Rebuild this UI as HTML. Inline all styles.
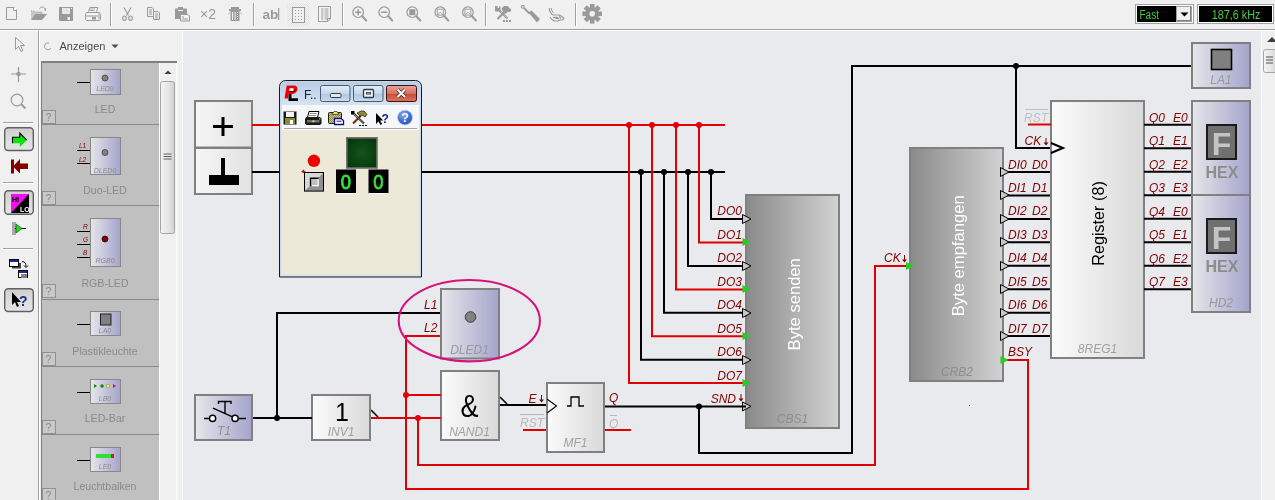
<!DOCTYPE html><html><head><meta charset="utf-8"><style>
html,body{margin:0;padding:0;width:1275px;height:500px;overflow:hidden;background:#e9eaee}
svg{position:absolute;left:0;top:0;font-family:"Liberation Sans",sans-serif;will-change:transform}
</style></head><body>
<svg width="1275" height="500" viewBox="0 0 1275 500">
<defs>
<linearGradient id="gGate" x1="0" x2="1" y1="0" y2="0"><stop offset="0" stop-color="#fbfbfb"/><stop offset="1" stop-color="#d9d9d9"/></linearGradient>
<linearGradient id="gBlue" x1="0" x2="1" y1="0" y2="0"><stop offset="0" stop-color="#e6e6ea"/><stop offset="1" stop-color="#a4a4cc"/></linearGradient>
<linearGradient id="gDark" x1="0" x2="1" y1="0" y2="0"><stop offset="0" stop-color="#8a8a8a"/><stop offset="1" stop-color="#d2d2d2"/></linearGradient>
<linearGradient id="gTitle" x1="0" x2="0" y1="0" y2="1"><stop offset="0" stop-color="#b9cde6"/><stop offset="1" stop-color="#d6e3f1"/></linearGradient>
<linearGradient id="gBtn" x1="0" x2="0" y1="0" y2="1"><stop offset="0" stop-color="#e4edf7"/><stop offset="0.5" stop-color="#c5d7ea"/><stop offset="0.51" stop-color="#b0c7e0"/><stop offset="1" stop-color="#c9dbee"/></linearGradient>
<linearGradient id="gClose" x1="0" x2="0" y1="0" y2="1"><stop offset="0" stop-color="#e8a598"/><stop offset="0.5" stop-color="#d8705e"/><stop offset="0.51" stop-color="#c84a36"/><stop offset="1" stop-color="#d87860"/></linearGradient>
<linearGradient id="gThumb" x1="0" x2="1" y1="0" y2="0"><stop offset="0" stop-color="#f4f4f4"/><stop offset="0.6" stop-color="#e4e4e4"/><stop offset="1" stop-color="#cfcfcf"/></linearGradient>
</defs>

<rect x="0" y="0" width="1275" height="30" fill="#f0f0f0"/>
<rect x="0" y="29" width="1275" height="1" fill="#a0a0a0"/>
<rect x="0" y="30" width="1275" height="1" fill="#ffffff"/>
<rect x="0" y="31" width="183" height="469" fill="#f0f0f0"/>
<rect x="38" y="31" width="1" height="469" fill="#a0a0a0"/>
<rect x="39" y="31" width="1" height="469" fill="#ffffff"/>
<rect x="41" y="61" width="136" height="439" fill="#808080"/>
<rect x="42" y="63" width="117" height="437" fill="#c0c0c0"/>
<rect x="159" y="63" width="17" height="437" fill="#f0f0f0"/>
<rect x="159" y="63" width="1" height="437" fill="#ffffff"/>
<rect x="176" y="63" width="1" height="437" fill="#ffffff"/>
<path d="M164.5 74 L168 70.5 L171.5 74 Z" fill="#404040"/>
<rect x="160.5" y="81.5" width="14" height="152" rx="2" fill="url(#gThumb)" stroke="#a6a6a6"/>
<path d="M163.5 154h8M163.5 156.5h8M163.5 159h8" stroke="#606060" stroke-width="1"/>
<rect x="182" y="31" width="1" height="469" fill="#ffffff"/>
<rect x="1262" y="31" width="13" height="469" fill="#f0f0f0"/>
<rect x="1261" y="31" width="1" height="469" fill="#ffffff"/>
<path d="M1267 42 L1272 37 L1277 42 Z" fill="#404040"/>
<rect x="1263.5" y="49.5" width="14" height="23" rx="2" fill="url(#gThumb)" stroke="#a6a6a6"/>
<path d="M1266 57h7M1266 60h7M1266 63h7" stroke="#505050" stroke-width="1"/>
<path d="M6.5 7.5h7.5l2.5 2.5v9.5h-10z" fill="#f0f0f0" stroke="#9a9a9a"/><path d="M13.5 7.5v3h3" fill="none" stroke="#9a9a9a"/><rect x="14" y="8" width="2" height="2" fill="#fff"/>
<path d="M31 11h3l1 1h7v2h-7l-4 6z" fill="#c8c8c8"/><path d="M31 20l4-6h12l-5 6z" fill="#9a9a9a"/><path d="M31 11h3l1 1h7v2" fill="none" stroke="#9a9a9a" stroke-dasharray="1 1"/><path d="M39.5 8.5c2-2 4-2 5 0M44.5 8.5l1 2M46 8l-1 2.5" fill="none" stroke="#9a9a9a"/>
<path d="M59 7h14v14h-13l-1-1z" fill="#9a9a9a"/><rect x="62" y="8" width="8" height="6" fill="#e6e6e6"/><rect x="67.5" y="17" width="2.5" height="3" fill="#f0f0f0"/><rect x="71" y="8" width="1" height="1" fill="#f0f0f0"/>
<path d="M88.5 11.5l1.5-4h8l-1.5 4" fill="#f4f4f4" stroke="#9a9a9a"/><path d="M90 9h5M89.5 10.5h5" stroke="#9a9a9a" stroke-width="0.8"/>
<path d="M86.5 12.5h13l1 2v5l-1 1h-13l-1-1v-5z" fill="#f4f4f4" stroke="#9a9a9a"/><rect x="86" y="15.5" width="14" height="1" fill="#9a9a9a"/><rect x="92" y="17" width="4" height="2.5" fill="#9a9a9a"/><rect x="98" y="13.5" width="2" height="6" fill="#c8c8c8"/>
<rect x="110" y="3" width="1" height="23" fill="#a0a0a0"/><rect x="111" y="3" width="1" height="23" fill="#ffffff"/>
<path d="M124 7.5l4.5 8M131 7.5l-4.5 8" stroke="#9a9a9a" stroke-width="1.1" fill="none"/><ellipse cx="124.5" cy="18.2" rx="1.8" ry="2.2" fill="none" stroke="#9a9a9a" stroke-width="1.1"/><ellipse cx="130.5" cy="18.2" rx="1.8" ry="2.2" fill="none" stroke="#9a9a9a" stroke-width="1.1"/>
<path d="M147.5 7.5h4.5l1.5 1.5v7.5h-6z" fill="#f0f0f0" stroke="#9a9a9a"/><path d="M149 10h3M149 12h3M149 14h3" stroke="#9a9a9a"/><path d="M153.5 11.5h4.5l1.5 1.5v6.5h-6z" fill="#f0f0f0" stroke="#9a9a9a"/><path d="M155 14h3M155 16h3M155 18h3" stroke="#9a9a9a"/>
<path d="M175 8.5h11a1 1 0 0 1 1 1v9.5h-12z" fill="#9a9a9a"/><rect x="178" y="7" width="5" height="2" fill="#9a9a9a"/><rect x="178" y="10" width="5" height="1" fill="#f0f0f0"/><path d="M180.5 14.5h7.5l1.5 1.5v5h-9z" fill="#f4f4f4" stroke="#9a9a9a"/><path d="M182 17h2M182 19h6" stroke="#9a9a9a"/>
<text x="200" y="18.5" font-size="14" fill="#9a9a9a">×2</text>
<path d="M229 9h12v2h-12z M231 7h8v2h-8z M230.5 11h9v10h-9z" fill="#9a9a9a"/><path d="M232.5 12v8M235 12v8" stroke="#f4f4f4"/><path d="M237.5 12v1M237.5 14v1M237.5 16v1M237.5 18v1" stroke="#f4f4f4"/><path d="M228 14l2 -1M242 14l-2-1" stroke="#9a9a9a" stroke-width="0.6"/>
<rect x="253" y="3" width="1" height="23" fill="#a0a0a0"/><rect x="254" y="3" width="1" height="23" fill="#ffffff"/>
<text x="262.5" y="19" font-size="13.5" fill="#9a9a9a" font-weight="bold">ab</text><rect x="278" y="8" width="1.2" height="12" fill="#9a9a9a"/>
<pattern id="chk" width="2" height="2" patternUnits="userSpaceOnUse"><rect width="2" height="2" fill="#f4f4f4"/><rect width="1" height="1" fill="#e2e2e2"/><rect x="1" y="1" width="1" height="1" fill="#e2e2e2"/></pattern>
<rect x="287" y="3" width="23" height="23" fill="url(#chk)"/><rect x="292.5" y="7.5" width="12" height="15" fill="#f0f0f0" stroke="#9a9a9a"/>
<rect x="295" y="10" width="1" height="1" fill="#9a9a9a"/>
<rect x="295" y="13" width="1" height="1" fill="#9a9a9a"/>
<rect x="295" y="16" width="1" height="1" fill="#9a9a9a"/>
<rect x="295" y="19" width="1" height="1" fill="#9a9a9a"/>
<rect x="298" y="10" width="1" height="1" fill="#9a9a9a"/>
<rect x="298" y="13" width="1" height="1" fill="#9a9a9a"/>
<rect x="298" y="16" width="1" height="1" fill="#9a9a9a"/>
<rect x="298" y="19" width="1" height="1" fill="#9a9a9a"/>
<rect x="301" y="10" width="1" height="1" fill="#9a9a9a"/>
<rect x="301" y="13" width="1" height="1" fill="#9a9a9a"/>
<rect x="301" y="16" width="1" height="1" fill="#9a9a9a"/>
<rect x="301" y="19" width="1" height="1" fill="#9a9a9a"/>
<path d="M318.5 6.5h12v12.5l-3 2.5h-9z" fill="#f4f4f4" stroke="#9a9a9a"/><path d="M327.5 21.5v-3h3" fill="none" stroke="#9a9a9a"/>
<rect x="321" y="8.5" width="2.5" height="1" fill="#9a9a9a"/><rect x="324.5" y="8.5" width="4" height="1" fill="#9a9a9a"/><rect x="321" y="10.5" width="2.5" height="1" fill="#9a9a9a"/><rect x="324.5" y="10.5" width="4" height="1" fill="#9a9a9a"/><rect x="321" y="12.5" width="2.5" height="1" fill="#9a9a9a"/><rect x="324.5" y="12.5" width="4" height="1" fill="#9a9a9a"/><rect x="321" y="14.5" width="2.5" height="1" fill="#9a9a9a"/><rect x="324.5" y="14.5" width="4" height="1" fill="#9a9a9a"/><rect x="321" y="16.5" width="2.5" height="1" fill="#9a9a9a"/><rect x="324.5" y="16.5" width="4" height="1" fill="#9a9a9a"/><rect x="321" y="18.5" width="2.5" height="1" fill="#9a9a9a"/><rect x="324.5" y="18.5" width="4" height="1" fill="#9a9a9a"/>
<rect x="342" y="3" width="1" height="23" fill="#a0a0a0"/><rect x="343" y="3" width="1" height="23" fill="#ffffff"/>
<circle cx="358.2" cy="12.2" r="5.3" fill="#f2f2f2" stroke="#9a9a9a" stroke-width="1.2"/><path d="M362.0 16l4.2 4.5" stroke="#9a9a9a" stroke-width="2" stroke-linecap="round"/><path d="M355.2 12.2h6M358.2 9.2v6" stroke="#9a9a9a" stroke-width="1.6"/>
<circle cx="384.2" cy="12.2" r="5.3" fill="#f2f2f2" stroke="#9a9a9a" stroke-width="1.2"/><path d="M388.0 16l4.2 4.5" stroke="#9a9a9a" stroke-width="2" stroke-linecap="round"/><path d="M381.2 12.2h6" stroke="#9a9a9a" stroke-width="1.6"/>
<circle cx="412.3" cy="12.2" r="5.3" fill="#f2f2f2" stroke="#9a9a9a" stroke-width="1.2"/><path d="M416.1 16l4.2 4.5" stroke="#9a9a9a" stroke-width="2" stroke-linecap="round"/><rect x="409.3" y="9.2" width="6" height="6" fill="#9a9a9a"/>
<circle cx="440.3" cy="12.2" r="5.3" fill="#f2f2f2" stroke="#9a9a9a" stroke-width="1.2"/><path d="M444.1 16l4.2 4.5" stroke="#9a9a9a" stroke-width="2" stroke-linecap="round"/><path d="M437.3 9.2h6v6h-6zM437.3 15.2l3-3 3 3" fill="none" stroke="#9a9a9a" stroke-width="0.9"/>
<circle cx="467.9" cy="12.2" r="5.3" fill="#f2f2f2" stroke="#9a9a9a" stroke-width="1.2"/><path d="M471.7 16l4.2 4.5" stroke="#9a9a9a" stroke-width="2" stroke-linecap="round"/><path d="M464.9 9.2h6v6h-6zM464.9 15.2l3-3 3 3" fill="none" stroke="#9a9a9a" stroke-width="0.9"/>
<rect x="485" y="3" width="1" height="23" fill="#a0a0a0"/><rect x="486" y="3" width="1" height="23" fill="#ffffff"/>
<path d="M499 10l8.5 8.5" stroke="#9a9a9a" stroke-width="2.2"/><path d="M499.5 10.5l7.5 7.5" stroke="#f0f0f0" stroke-width="0.7" stroke-dasharray="1 1"/><path d="M495 6h2.5v2h1.5v-1.5h1.5v3.5l-1.5 1.5h-4z" fill="#9a9a9a"/>
<path d="M497.5 19l7.5-7.5" stroke="#9a9a9a" stroke-width="2.2"/><path d="M501.5 8.5l2.5-2.5h3.5l4 4-2 2.5-1.5-1-2.5 2.5-3-3z" fill="#9a9a9a"/>
<path d="M503 20h2v2h-2zM506 20h2v2h-2zM509 20h2v2h-2z" fill="#9a9a9a"/>
<circle cx="522.8" cy="6.8" r="1.4" fill="#f0f0f0" stroke="#9a9a9a" stroke-width="1.1"/><path d="M524 8l5.5 5.5" stroke="#9a9a9a" stroke-width="1.8"/><path d="M528.5 12.5l3-2 8.5 8.5-3 3.5z" fill="#9a9a9a"/>
<path d="M549.5 8v2.5l2 3.5 2 1h5.5l3 1.5 2 2-1.5 1.5h-3l-1.5 1h-4l-2.5-2-1.5-2" fill="none" stroke="#9a9a9a" stroke-width="1.1"/><path d="M551.5 8v2l2 3" fill="none" stroke="#9a9a9a" stroke-width="0.9"/><path d="M553 17.5h4l1.5 1.5M559 16.5l2 2" stroke="#9a9a9a" stroke-width="1.3"/>
<rect x="575" y="3" width="1" height="23" fill="#a0a0a0"/><rect x="576" y="3" width="1" height="23" fill="#ffffff"/>
<g transform="translate(592.2 13.8)"><circle r="6.8" fill="#9a9a9a"/><rect x="-2.3" y="-9.8" width="4.6" height="5" fill="#9a9a9a" transform="rotate(0)"/><rect x="-2.3" y="-9.8" width="4.6" height="5" fill="#9a9a9a" transform="rotate(45)"/><rect x="-2.3" y="-9.8" width="4.6" height="5" fill="#9a9a9a" transform="rotate(90)"/><rect x="-2.3" y="-9.8" width="4.6" height="5" fill="#9a9a9a" transform="rotate(135)"/><rect x="-2.3" y="-9.8" width="4.6" height="5" fill="#9a9a9a" transform="rotate(180)"/><rect x="-2.3" y="-9.8" width="4.6" height="5" fill="#9a9a9a" transform="rotate(225)"/><rect x="-2.3" y="-9.8" width="4.6" height="5" fill="#9a9a9a" transform="rotate(270)"/><rect x="-2.3" y="-9.8" width="4.6" height="5" fill="#9a9a9a" transform="rotate(315)"/><circle r="2.8" fill="#f0f0f0"/></g>
<rect x="1135" y="4" width="59" height="20" fill="#a0a0a0"/><rect x="1136" y="5" width="57" height="18" fill="#ffffff"/><rect x="1137" y="6" width="39" height="16" fill="#000"/>
<rect x="1176" y="6" width="16" height="16" fill="#a0a0a0"/><rect x="1177" y="7" width="14" height="14" fill="#f0f0f0"/><rect x="1190" y="7" width="1" height="14" fill="#808080"/><rect x="1177" y="20" width="14" height="1" fill="#808080"/><path d="M1180.5 12.5h8l-4 4z" fill="#000"/>
<text x="1139.5" y="19" font-size="12" fill="#40d040" textLength="19.5" lengthAdjust="spacingAndGlyphs">Fast</text>
<rect x="1197" y="4" width="77" height="20" fill="#a0a0a0"/><rect x="1198" y="5" width="75" height="18" fill="#ffffff"/><rect x="1199" y="6" width="73" height="16" fill="#000"/>
<text x="1211.8" y="19" font-size="12" fill="#40d040" textLength="48.6" lengthAdjust="spacingAndGlyphs">187,6 kHz</text>
<path d="M15.5 37.5v12l3-3 2.5 5 2-1-2.5-5h4z" fill="#f4f4f4" stroke="#9a9a9a"/>
<path d="M11 74h15M18.5 67v15" stroke="#9a9a9a" stroke-width="1.2"/><circle cx="18.5" cy="74" r="2.2" fill="#9a9a9a"/>
<circle cx="17" cy="100" r="5.8" fill="none" stroke="#9a9a9a" stroke-width="1.2"/><path d="M21 104l4.5 4.5" stroke="#9a9a9a" stroke-width="2"/>
<rect x="3" y="122" width="30" height="1" fill="#a0a0a0"/><rect x="3" y="123" width="30" height="1" fill="#fff"/>
<linearGradient id="gPb" x1="0" x2="0" y1="0" y2="1"><stop offset="0" stop-color="#cfcfcf"/><stop offset="0.5" stop-color="#dcdcdc"/><stop offset="1" stop-color="#e4e4e4"/></linearGradient>
<rect x="4.7" y="127.7" width="28.6" height="22.8" rx="3.5" fill="url(#gPb)" stroke="#606060" stroke-width="1.4"/>
<path d="M12.5 137.2h7.3v-4.2l7.2 7.1-7.2 7v-3.9h-7.3z" fill="#10e010"/><path d="M12.5 143.2v-6h7.3v-4.2l6.8 6.8" fill="none" stroke="#000" stroke-width="1.1"/>
<path d="M28 163.5h-8v-4.5l-7 7.5 7 7v-4.5h8z" fill="#800000"/><rect x="11" y="159.5" width="3" height="14" fill="#800000"/>
<rect x="3" y="182" width="30" height="1" fill="#a0a0a0"/><rect x="3" y="183" width="30" height="1" fill="#fff"/>
<rect x="4.7" y="190.7" width="28.6" height="23.6" rx="3.5" fill="url(#gPb)" stroke="#606060" stroke-width="1.4"/>
<path d="M11 194h18v19h-18z" fill="#f010f0"/><path d="M29 194v19h-18z" fill="#000"/>
<text x="12" y="201.5" font-size="7" font-weight="bold" fill="#000">HI</text><text x="20" y="211.5" font-size="7" font-weight="bold" fill="#fff">LO</text>
<rect x="12" y="222" width="4" height="13" fill="#a8a8a8"/><path d="M15 228.5h11" stroke="#000" stroke-width="1"/><path d="M16 224l6 4.5-6 4.5z" fill="#30d030" stroke="#107010" stroke-width="0.8"/>
<rect x="3" y="248" width="30" height="1" fill="#a0a0a0"/><rect x="3" y="249" width="30" height="1" fill="#fff"/>
<rect x="9.5" y="259.5" width="9" height="7" fill="#fff" stroke="#000"/><rect x="10" y="260" width="8" height="2" fill="#1a2a9a"/><rect x="19" y="263" width="2" height="5" fill="#404040"/><rect x="12" y="267" width="9" height="1.5" fill="#404040"/>
<rect x="18.5" y="270.5" width="9" height="7" fill="#fff" stroke="#000"/><rect x="19" y="271" width="8" height="2" fill="#1a2a9a"/><rect x="21" y="274" width="6" height="4" fill="#808080"/>
<path d="M22 261.5c3 0 4 2 4 5" fill="none" stroke="#000"/><path d="M24 265.5l2 2 2-2" fill="none" stroke="#000"/>
<rect x="4.7" y="288.7" width="28.6" height="22.8" rx="3.5" fill="url(#gPb)" stroke="#606060" stroke-width="1.4"/>
<path d="M12 292v13l3-3 2 5 2-1-2-4h4z" fill="#000"/><text x="19" y="306" font-size="14" font-weight="bold" fill="#1a2a9a">?</text>
<path d="M49 43a3.5 3.5 0 1 0 2 5" fill="none" stroke="#a0a0a0"/>
<text x="59.5" y="50" font-size="11" fill="#4a4a4a">Anzeigen</text>
<path d="M111.5 44.5h7l-3.5 3.8z" fill="#505050"/>
<rect x="90.5" y="69.5" width="30" height="25" fill="url(#gBlue)" stroke="#888"/>
<rect x="77" y="82" width="13" height="1" fill="#000"/>
<circle cx="105" cy="78" r="3" fill="#808080" stroke="#404040" stroke-width="0.8"/>
<text x="105" y="91" font-size="7" font-style="italic" fill="#8a8a8a" text-anchor="middle">LED0</text>
<text x="105" y="113" font-size="10.6" fill="#8a8a8a" text-anchor="middle">LED</text>
<rect x="42.5" y="110.5" width="13" height="13" fill="#c8c8c8" stroke="#909090"/><text x="45.5" y="121" font-size="10.5" fill="#8a8a8a">?</text>
<rect x="42" y="124" width="117" height="1" fill="#8a8a8a"/>
<rect x="90.5" y="137.5" width="30" height="37" fill="url(#gBlue)" stroke="#888"/>
<rect x="77" y="150" width="13" height="1" fill="#000"/>
<rect x="77" y="163" width="13" height="1" fill="#000"/>
<text x="79" y="148" font-size="6.5" font-style="italic" fill="#800000">L1</text><text x="79" y="162" font-size="6.5" font-style="italic" fill="#800000">L2</text>
<circle cx="105" cy="152.5" r="3" fill="#808080" stroke="#404040" stroke-width="0.8"/>
<text x="105" y="172.5" font-size="7" font-style="italic" fill="#8a8a8a" text-anchor="middle">DLED0</text>
<text x="105" y="194" font-size="10.6" fill="#8a8a8a" text-anchor="middle">Duo-LED</text>
<rect x="42.5" y="191.5" width="13" height="13" fill="#c8c8c8" stroke="#909090"/><text x="45.5" y="202" font-size="10.5" fill="#8a8a8a">?</text>
<rect x="42" y="205" width="117" height="1" fill="#8a8a8a"/>
<rect x="90.5" y="218.5" width="30" height="48" fill="url(#gBlue)" stroke="#888"/>
<rect x="77" y="231" width="13" height="1" fill="#000"/>
<rect x="77" y="244" width="13" height="1" fill="#000"/>
<rect x="77" y="257" width="13" height="1" fill="#000"/>
<text x="83" y="229" font-size="6.5" font-style="italic" fill="#800000">R</text><text x="83" y="242" font-size="6.5" font-style="italic" fill="#800000">G</text><text x="83" y="255" font-size="6.5" font-style="italic" fill="#800000">B</text>
<circle cx="105" cy="239" r="3" fill="#800000" stroke="#400000" stroke-width="0.8"/>
<text x="105" y="263" font-size="7" font-style="italic" fill="#8a8a8a" text-anchor="middle">RGB0</text>
<text x="105" y="287" font-size="10.6" fill="#8a8a8a" text-anchor="middle">RGB-LED</text>
<rect x="42.5" y="284.5" width="13" height="13" fill="#c8c8c8" stroke="#909090"/><text x="45.5" y="295" font-size="10.5" fill="#8a8a8a">?</text>
<rect x="42" y="299" width="117" height="1" fill="#8a8a8a"/>
<rect x="90.5" y="311.5" width="30" height="24" fill="url(#gBlue)" stroke="#888"/>
<rect x="77" y="324" width="13" height="1" fill="#000"/>
<rect x="100.5" y="314" width="10.5" height="11" fill="#808080" stroke="#202020"/>
<text x="105" y="333" font-size="7" font-style="italic" fill="#8a8a8a" text-anchor="middle">LA0</text>
<text x="105" y="355" font-size="10.6" fill="#8a8a8a" text-anchor="middle">Plastikleuchte</text>
<rect x="42.5" y="352.5" width="13" height="13" fill="#c8c8c8" stroke="#909090"/><text x="45.5" y="363" font-size="10.5" fill="#8a8a8a">?</text>
<rect x="42" y="366" width="117" height="1" fill="#8a8a8a"/>
<rect x="90.5" y="379.5" width="30" height="24" fill="url(#gBlue)" stroke="#888"/>
<rect x="77" y="392" width="13" height="1" fill="#000"/>
<path d="M94 384l3 2-3 2z" fill="#208020"/><circle cx="102" cy="386" r="1.8" fill="#208020"/><circle cx="108" cy="386" r="1.8" fill="#f0f060" stroke="#808000" stroke-width="0.5"/><path d="M113 384l3 2-3 2z" fill="#c02020"/>
<text x="105" y="401" font-size="7" font-style="italic" fill="#8a8a8a" text-anchor="middle">LB0</text>
<text x="105" y="422" font-size="10.6" fill="#8a8a8a" text-anchor="middle">LED-Bar</text>
<rect x="42.5" y="420.5" width="13" height="13" fill="#c8c8c8" stroke="#909090"/><text x="45.5" y="431" font-size="10.5" fill="#8a8a8a">?</text>
<rect x="42" y="434" width="117" height="1" fill="#8a8a8a"/>
<rect x="90.5" y="447.5" width="30" height="24" fill="url(#gBlue)" stroke="#888"/>
<rect x="77" y="460" width="13" height="1" fill="#000"/>
<rect x="96" y="454" width="15" height="4" fill="#30e030"/><rect x="111" y="454" width="3" height="4" fill="#d02020"/>
<text x="105" y="469" font-size="7" font-style="italic" fill="#8a8a8a" text-anchor="middle">LE0</text>
<text x="105" y="490" font-size="10.6" fill="#8a8a8a" text-anchor="middle">Leuchtbalken</text>
<rect x="42.5" y="488.5" width="13" height="13" fill="#c8c8c8" stroke="#909090"/><text x="45.5" y="499" font-size="10.5" fill="#8a8a8a">?</text>
<rect x="194" y="100" width="59" height="95" fill="#808080"/>
<linearGradient id="gPw" x1="0" x2="1"><stop offset="0" stop-color="#f6f6f6"/><stop offset="1" stop-color="#e2e2e2"/></linearGradient>
<rect x="196" y="102" width="55" height="44.5" fill="url(#gPw)"/><rect x="196" y="149" width="55" height="44" fill="url(#gPw)"/>
<rect x="213" y="125" width="20" height="3" fill="#000"/><rect x="221.5" y="117" width="3" height="19" fill="#000"/>
<rect x="221" y="158" width="4" height="18" fill="#000"/><rect x="209" y="175" width="30" height="10" fill="#000"/>
<path d="M253 125H280" fill="none" stroke="#e00000" stroke-width="2" stroke-linejoin="miter" stroke-linecap="square"/>
<path d="M421 125H724" fill="none" stroke="#e00000" stroke-width="2" stroke-linejoin="miter" stroke-linecap="square"/>
<path d="M253 172H280" fill="none" stroke="#000000" stroke-width="2" stroke-linejoin="miter" stroke-linecap="square"/>
<path d="M421 172H724" fill="none" stroke="#000000" stroke-width="2" stroke-linejoin="miter" stroke-linecap="square"/>
<path d="M711 172V219.0H745" fill="none" stroke="#000000" stroke-width="2" stroke-linejoin="miter" stroke-linecap="square"/>
<path d="M688 172V265.9H745" fill="none" stroke="#000000" stroke-width="2" stroke-linejoin="miter" stroke-linecap="square"/>
<path d="M664 172V312.8H745" fill="none" stroke="#000000" stroke-width="2" stroke-linejoin="miter" stroke-linecap="square"/>
<path d="M641 172V359.7H745" fill="none" stroke="#000000" stroke-width="2" stroke-linejoin="miter" stroke-linecap="square"/>
<path d="M699 125V242.4H745" fill="none" stroke="#e00000" stroke-width="2" stroke-linejoin="miter" stroke-linecap="square"/>
<path d="M676 125V289.4H745" fill="none" stroke="#e00000" stroke-width="2" stroke-linejoin="miter" stroke-linecap="square"/>
<path d="M652 125V336.2H745" fill="none" stroke="#e00000" stroke-width="2" stroke-linejoin="miter" stroke-linecap="square"/>
<path d="M629 125V383.1H745" fill="none" stroke="#e00000" stroke-width="2" stroke-linejoin="miter" stroke-linecap="square"/>
<circle cx="711" cy="172" r="3" fill="#000000"/>
<circle cx="688" cy="172" r="3" fill="#000000"/>
<circle cx="664" cy="172" r="3" fill="#000000"/>
<circle cx="641" cy="172" r="3" fill="#000000"/>
<circle cx="699" cy="125" r="3" fill="#e00000"/>
<circle cx="676" cy="125" r="3" fill="#e00000"/>
<circle cx="652" cy="125" r="3" fill="#e00000"/>
<circle cx="629" cy="125" r="3" fill="#e00000"/>
<rect x="746" y="195" width="93" height="233" fill="url(#gDark)" stroke="#808080" stroke-width="2"/>
<text transform="translate(800 304.3) rotate(-90)" font-size="16.6" fill="#ffffff" text-anchor="middle">Byte senden</text>
<text x="792.5" y="423" font-size="12" font-style="italic" fill="#8c8c8c" text-anchor="middle" >CBS1</text>
<path d="M742.5 214.5L751.0 219L742.5 223.5z" fill="#c8c8c8"/><path d="M751.0 219L742.5 214.5V223.5L751.0 219" fill="none" stroke="#000" stroke-width="1"/>
<text x="742" y="215.4" font-size="12" font-style="italic" fill="#800000" text-anchor="end" >DO0</text>
<path d="M742.5 238L750.5 242L742.5 246z" fill="#20d020"/>
<text x="742" y="238.85" font-size="12" font-style="italic" fill="#800000" text-anchor="end" >DO1</text>
<path d="M742.5 261.5L751.0 266L742.5 270.5z" fill="#c8c8c8"/><path d="M751.0 266L742.5 261.5V270.5L751.0 266" fill="none" stroke="#000" stroke-width="1"/>
<text x="742" y="262.29999999999995" font-size="12" font-style="italic" fill="#800000" text-anchor="end" >DO2</text>
<path d="M742.5 285L750.5 289L742.5 293z" fill="#20d020"/>
<text x="742" y="285.75" font-size="12" font-style="italic" fill="#800000" text-anchor="end" >DO3</text>
<path d="M742.5 308.5L751.0 313L742.5 317.5z" fill="#c8c8c8"/><path d="M751.0 313L742.5 308.5V317.5L751.0 313" fill="none" stroke="#000" stroke-width="1"/>
<text x="742" y="309.2" font-size="12" font-style="italic" fill="#800000" text-anchor="end" >DO4</text>
<path d="M742.5 332L750.5 336L742.5 340z" fill="#20d020"/>
<text x="742" y="332.65" font-size="12" font-style="italic" fill="#800000" text-anchor="end" >DO5</text>
<path d="M742.5 355.5L751.0 360L742.5 364.5z" fill="#c8c8c8"/><path d="M751.0 360L742.5 355.5V364.5L751.0 360" fill="none" stroke="#000" stroke-width="1"/>
<text x="742" y="356.09999999999997" font-size="12" font-style="italic" fill="#800000" text-anchor="end" >DO6</text>
<path d="M742.5 379L750.5 383L742.5 387z" fill="#20d020"/>
<text x="742" y="379.54999999999995" font-size="12" font-style="italic" fill="#800000" text-anchor="end" >DO7</text>
<path d="M742.5 401.9L751.0 406.4L742.5 410.9z" fill="#c8c8c8"/><path d="M751.0 406.4L742.5 401.9V410.9L751.0 406.4" fill="none" stroke="#000" stroke-width="1"/>
<text x="736" y="402.5" font-size="12" font-style="italic" fill="#800000" text-anchor="end" >SND</text>
<path d="M741 394v5" stroke="#800000" stroke-width="1"/><path d="M738.5 398.5h5l-2.5 3z" fill="#800000"/>
<path d="M605 406.4H745" fill="none" stroke="#000000" stroke-width="2" stroke-linejoin="miter" stroke-linecap="square"/>
<path d="M699 406.4V453H852V66H1191" fill="none" stroke="#000000" stroke-width="2" stroke-linejoin="miter" stroke-linecap="square"/>
<circle cx="699" cy="406.4" r="3" fill="#000000"/>
<circle cx="1016" cy="66" r="3" fill="#000000"/>
<path d="M1016 66V148H1051" fill="none" stroke="#000000" stroke-width="2" stroke-linejoin="miter" stroke-linecap="square"/>
<rect x="547" y="383" width="57" height="69" fill="url(#gGate)" stroke="#808080" stroke-width="2"/>
<path d="M567 406h4v-9h8v9h5" fill="none" stroke="#000" stroke-width="1.3"/>
<path d="M547 399L556.5 406L547 413" fill="none" stroke="#000" stroke-width="1.1"/>
<text x="575.5" y="447" font-size="12" font-style="italic" fill="#a0a0a0" text-anchor="middle" >MF1</text>
<text x="609" y="402" font-size="12" font-style="italic" fill="#800000" text-anchor="start" >Q</text>
<text x="609" y="428" font-size="12" font-style="italic" fill="#b8b8b8" text-anchor="start" >Q</text>
<rect x="610" y="415" width="7" height="1" fill="#b8b8b8"/>
<path d="M606 430H630" fill="none" stroke="#e00000" stroke-width="2" stroke-linejoin="miter" stroke-linecap="square"/>
<text x="528.5" y="402.5" font-size="12" font-style="italic" fill="#800000" text-anchor="start" >E</text>
<path d="M541.5 395v5" stroke="#800000" stroke-width="1"/><path d="M539 399.5h5l-2.5 3z" fill="#800000"/>
<text x="520" y="427" font-size="12" font-style="italic" fill="#b8b8b8" text-anchor="start" >RST</text>
<rect x="520" y="414" width="24" height="1" fill="#b8b8b8"/>
<path d="M524 430H545" fill="none" stroke="#e00000" stroke-width="2" stroke-linejoin="miter" stroke-linecap="square"/>
<path d="M500 405H545" fill="none" stroke="#000000" stroke-width="2" stroke-linejoin="miter" stroke-linecap="square"/>
<path d="M500 397L507 404" stroke="#000" stroke-width="1.6"/>
<rect x="441" y="371" width="58" height="69" fill="url(#gGate)" stroke="#808080" stroke-width="2"/>
<text transform="translate(469.5 417) scale(1 1.14)" font-size="27" fill="#000" text-anchor="middle">&amp;</text>
<text x="469.5" y="436" font-size="12" font-style="italic" fill="#a0a0a0" text-anchor="middle" >NAND1</text>
<path d="M371 418H440" fill="none" stroke="#e00000" stroke-width="2" stroke-linejoin="miter" stroke-linecap="square"/>
<path d="M371 410L378 417" stroke="#000" stroke-width="1.6"/>
<path d="M440 336H406V489H1028V360H1004" fill="none" stroke="#e00000" stroke-width="2" stroke-linejoin="miter" stroke-linecap="square"/>
<path d="M406 395H440" fill="none" stroke="#e00000" stroke-width="2" stroke-linejoin="miter" stroke-linecap="square"/>
<circle cx="406" cy="395" r="3" fill="#e00000"/>
<path d="M418 418V465H875V266H909" fill="none" stroke="#e00000" stroke-width="2" stroke-linejoin="miter" stroke-linecap="square"/>
<circle cx="418" cy="418" r="3" fill="#e00000"/>
<rect x="312" y="395" width="58" height="45" fill="url(#gGate)" stroke="#808080" stroke-width="2"/>
<text x="342" y="421" font-size="25" fill="#000" text-anchor="middle">1</text>
<text x="341" y="436" font-size="12" font-style="italic" fill="#a0a0a0" text-anchor="middle" >INV1</text>
<path d="M253 418H311" fill="none" stroke="#000000" stroke-width="2" stroke-linejoin="miter" stroke-linecap="square"/>
<path d="M277 418V313H440" fill="none" stroke="#000000" stroke-width="2" stroke-linejoin="miter" stroke-linecap="square"/>
<circle cx="277" cy="418" r="3" fill="#000000"/>
<rect x="195" y="395" width="57" height="45" fill="url(#gBlue)" stroke="#808080" stroke-width="2"/>
<path d="M204 418.5h5.5M238.5 418.5h7.5M213 408.2l19 8.5M225 401.5v12M218.5 404v-2.5h12.5v2.5" fill="none" stroke="#000" stroke-width="1.4"/>
<circle cx="212.6" cy="418.4" r="3.1" fill="#fff" stroke="#000" stroke-width="1.4"/><circle cx="235.1" cy="418.4" r="3.1" fill="#fff" stroke="#000" stroke-width="1.4"/>
<text x="224" y="435" font-size="12" font-style="italic" fill="#909098" text-anchor="middle" >T1</text>
<rect x="441" y="289" width="58" height="69.5" fill="url(#gBlue)" stroke="#808080" stroke-width="2"/>
<circle cx="470.5" cy="317" r="5.3" fill="#808080" stroke="#404040" stroke-width="1"/>
<text x="469.5" y="354" font-size="12" font-style="italic" fill="#9898a0" text-anchor="middle" >DLED1</text>
<text x="424" y="309" font-size="12" font-style="italic" fill="#800000" text-anchor="start" >L1</text>
<text x="424" y="332" font-size="12" font-style="italic" fill="#800000" text-anchor="start" >L2</text>
<ellipse cx="469.3" cy="320.7" rx="70.6" ry="40.7" fill="none" stroke="#d4147a" stroke-width="2.1"/>
<rect x="910" y="148" width="93" height="233" fill="url(#gDark)" stroke="#808080" stroke-width="2"/>
<text transform="translate(963.5 255.8) rotate(-90)" font-size="16.6" fill="#ffffff" text-anchor="middle">Byte empfangen</text>
<text x="957" y="376" font-size="12" font-style="italic" fill="#8c8c8c" text-anchor="middle" >CRB2</text>
<path d="M906 262L914 266L906 270z" fill="#20d020"/>
<text x="884" y="262" font-size="12" font-style="italic" fill="#800000" text-anchor="start" >CK</text>
<path d="M904.5 255v5" stroke="#800000" stroke-width="1"/><path d="M902 259.5h5l-2.5 3z" fill="#800000"/>
<path d="M1004 172.0H1051" fill="none" stroke="#000000" stroke-width="2" stroke-linejoin="miter" stroke-linecap="square"/>
<path d="M1000.5 167.5L1009.0 172L1000.5 176.5z" fill="#c8c8c8"/><path d="M1009.0 172L1000.5 167.5V176.5L1009.0 172" fill="none" stroke="#000" stroke-width="1"/>
<text x="1008" y="168.5" font-size="12" font-style="italic" fill="#800000" text-anchor="start" word-spacing="2">DI0 D0</text>
<path d="M1004 195.4H1051" fill="none" stroke="#000000" stroke-width="2" stroke-linejoin="miter" stroke-linecap="square"/>
<path d="M1000.5 190.5L1009.0 195L1000.5 199.5z" fill="#c8c8c8"/><path d="M1009.0 195L1000.5 190.5V199.5L1009.0 195" fill="none" stroke="#000" stroke-width="1"/>
<text x="1008" y="191.95" font-size="12" font-style="italic" fill="#800000" text-anchor="start" word-spacing="2">DI1 D1</text>
<path d="M1004 218.9H1051" fill="none" stroke="#000000" stroke-width="2" stroke-linejoin="miter" stroke-linecap="square"/>
<path d="M1000.5 214.5L1009.0 219L1000.5 223.5z" fill="#c8c8c8"/><path d="M1009.0 219L1000.5 214.5V223.5L1009.0 219" fill="none" stroke="#000" stroke-width="1"/>
<text x="1008" y="215.4" font-size="12" font-style="italic" fill="#800000" text-anchor="start" word-spacing="2">DI2 D2</text>
<path d="M1004 242.3H1051" fill="none" stroke="#000000" stroke-width="2" stroke-linejoin="miter" stroke-linecap="square"/>
<path d="M1000.5 237.5L1009.0 242L1000.5 246.5z" fill="#c8c8c8"/><path d="M1009.0 242L1000.5 237.5V246.5L1009.0 242" fill="none" stroke="#000" stroke-width="1"/>
<text x="1008" y="238.85" font-size="12" font-style="italic" fill="#800000" text-anchor="start" word-spacing="2">DI3 D3</text>
<path d="M1004 265.8H1051" fill="none" stroke="#000000" stroke-width="2" stroke-linejoin="miter" stroke-linecap="square"/>
<path d="M1000.5 261.5L1009.0 266L1000.5 270.5z" fill="#c8c8c8"/><path d="M1009.0 266L1000.5 261.5V270.5L1009.0 266" fill="none" stroke="#000" stroke-width="1"/>
<text x="1008" y="262.3" font-size="12" font-style="italic" fill="#800000" text-anchor="start" word-spacing="2">DI4 D4</text>
<path d="M1004 289.2H1051" fill="none" stroke="#000000" stroke-width="2" stroke-linejoin="miter" stroke-linecap="square"/>
<path d="M1000.5 284.5L1009.0 289L1000.5 293.5z" fill="#c8c8c8"/><path d="M1009.0 289L1000.5 284.5V293.5L1009.0 289" fill="none" stroke="#000" stroke-width="1"/>
<text x="1008" y="285.75" font-size="12" font-style="italic" fill="#800000" text-anchor="start" word-spacing="2">DI5 D5</text>
<path d="M1004 312.7H1051" fill="none" stroke="#000000" stroke-width="2" stroke-linejoin="miter" stroke-linecap="square"/>
<path d="M1000.5 308.5L1009.0 313L1000.5 317.5z" fill="#c8c8c8"/><path d="M1009.0 313L1000.5 308.5V317.5L1009.0 313" fill="none" stroke="#000" stroke-width="1"/>
<text x="1008" y="309.2" font-size="12" font-style="italic" fill="#800000" text-anchor="start" word-spacing="2">DI6 D6</text>
<path d="M1004 336.1H1051" fill="none" stroke="#000000" stroke-width="2" stroke-linejoin="miter" stroke-linecap="square"/>
<path d="M1000.5 331.5L1009.0 336L1000.5 340.5z" fill="#c8c8c8"/><path d="M1009.0 336L1000.5 331.5V340.5L1009.0 336" fill="none" stroke="#000" stroke-width="1"/>
<text x="1008" y="332.65" font-size="12" font-style="italic" fill="#800000" text-anchor="start" word-spacing="2">DI7 D7</text>
<path d="M1000.5 356L1008.5 360L1000.5 364z" fill="#20d020"/>
<text x="1008" y="356" font-size="12" font-style="italic" fill="#800000" text-anchor="start" >BSY</text>
<rect x="1051" y="101" width="93" height="257" fill="url(#gGate)" stroke="#808080" stroke-width="2"/>
<text transform="translate(1104 223.5) rotate(-90)" font-size="16.2" fill="#000" text-anchor="middle">Register (8)</text>
<text x="1097.5" y="353" font-size="12" font-style="italic" fill="#a0a0a0" text-anchor="middle" >8REG1</text>
<path d="M1051 143L1063 148L1051 153" fill="none" stroke="#000" stroke-width="2"/>
<text x="1024.5" y="145" font-size="12" font-style="italic" fill="#800000" text-anchor="start" >CK</text>
<path d="M1046 138v5" stroke="#800000" stroke-width="1"/><path d="M1043.5 142.5h5l-2.5 3z" fill="#800000"/>
<text x="1024" y="122" font-size="12" font-style="italic" fill="#c0c0c0" text-anchor="start" >RST</text>
<rect x="1025" y="109" width="23" height="1" fill="#c0c0c0"/>
<path d="M1029 124.5H1050" fill="none" stroke="#e00000" stroke-width="2" stroke-linejoin="miter" stroke-linecap="square"/>
<path d="M1145 124.8H1191" fill="none" stroke="#000000" stroke-width="2" stroke-linejoin="miter" stroke-linecap="square"/>
<text x="1149" y="121.8" font-size="12" font-style="italic" fill="#800000" text-anchor="start" >Q0</text>
<text x="1173" y="121.8" font-size="12" font-style="italic" fill="#800000" text-anchor="start" >E0</text>
<path d="M1145 148.3H1191" fill="none" stroke="#000000" stroke-width="2" stroke-linejoin="miter" stroke-linecap="square"/>
<text x="1149" y="145.3" font-size="12" font-style="italic" fill="#800000" text-anchor="start" >Q1</text>
<text x="1173" y="145.3" font-size="12" font-style="italic" fill="#800000" text-anchor="start" >E1</text>
<path d="M1145 171.8H1191" fill="none" stroke="#000000" stroke-width="2" stroke-linejoin="miter" stroke-linecap="square"/>
<text x="1149" y="168.8" font-size="12" font-style="italic" fill="#800000" text-anchor="start" >Q2</text>
<text x="1173" y="168.8" font-size="12" font-style="italic" fill="#800000" text-anchor="start" >E2</text>
<path d="M1145 195.3H1191" fill="none" stroke="#000000" stroke-width="2" stroke-linejoin="miter" stroke-linecap="square"/>
<text x="1149" y="192.3" font-size="12" font-style="italic" fill="#800000" text-anchor="start" >Q3</text>
<text x="1173" y="192.3" font-size="12" font-style="italic" fill="#800000" text-anchor="start" >E3</text>
<path d="M1145 218.8H1191" fill="none" stroke="#000000" stroke-width="2" stroke-linejoin="miter" stroke-linecap="square"/>
<text x="1149" y="215.8" font-size="12" font-style="italic" fill="#800000" text-anchor="start" >Q4</text>
<text x="1173" y="215.8" font-size="12" font-style="italic" fill="#800000" text-anchor="start" >E0</text>
<path d="M1145 242.3H1191" fill="none" stroke="#000000" stroke-width="2" stroke-linejoin="miter" stroke-linecap="square"/>
<text x="1149" y="239.3" font-size="12" font-style="italic" fill="#800000" text-anchor="start" >Q5</text>
<text x="1173" y="239.3" font-size="12" font-style="italic" fill="#800000" text-anchor="start" >E1</text>
<path d="M1145 265.8H1191" fill="none" stroke="#000000" stroke-width="2" stroke-linejoin="miter" stroke-linecap="square"/>
<text x="1149" y="262.8" font-size="12" font-style="italic" fill="#800000" text-anchor="start" >Q6</text>
<text x="1173" y="262.8" font-size="12" font-style="italic" fill="#800000" text-anchor="start" >E2</text>
<path d="M1145 289.3H1191" fill="none" stroke="#000000" stroke-width="2" stroke-linejoin="miter" stroke-linecap="square"/>
<text x="1149" y="286.3" font-size="12" font-style="italic" fill="#800000" text-anchor="start" >Q7</text>
<text x="1173" y="286.3" font-size="12" font-style="italic" fill="#800000" text-anchor="start" >E3</text>
<rect x="1192" y="43" width="58" height="45" fill="url(#gBlue)" stroke="#808080" stroke-width="2"/>
<rect x="1211.5" y="49.5" width="20" height="20" fill="#808080" stroke="#000" stroke-width="1.6"/>
<text x="1221" y="84" font-size="12" font-style="italic" fill="#9898a0" text-anchor="middle" >LA1</text>
<rect x="1192" y="101" width="58" height="94" fill="url(#gBlue)" stroke="#808080" stroke-width="2"/>
<rect x="1192" y="195" width="58" height="117" fill="url(#gBlue)" stroke="#808080" stroke-width="2"/>
<rect x="1207" y="125" width="29" height="34" fill="#707070" stroke="#1a1a1a" stroke-width="2"/>
<text x="1221.5" y="155" font-size="32" font-weight="bold" fill="#c4c4c4" text-anchor="middle">F</text>
<rect x="1207" y="219" width="29" height="34" fill="#707070" stroke="#1a1a1a" stroke-width="2"/>
<text x="1221.5" y="249" font-size="32" font-weight="bold" fill="#c4c4c4" text-anchor="middle">F</text>
<text x="1222" y="177.7" font-size="16" font-weight="bold" fill="#8c8c8c" text-anchor="middle">HEX</text>
<text x="1222" y="271.7" font-size="16" font-weight="bold" fill="#8c8c8c" text-anchor="middle">HEX</text>
<text x="1221" y="307" font-size="12" font-style="italic" fill="#9898a0" text-anchor="middle" >HD2</text>
<circle cx="969.5" cy="405.5" r="0.6" fill="#e00000"/>
<path d="M279.5 277V86.5a6 6 0 0 1 6-6h130a6 6 0 0 1 6 6V277z" fill="#c6d8ec" stroke="#1a1a1a" stroke-width="1"/>
<path d="M281 105V87a5 5 0 0 1 5-5h129a5 5 0 0 1 5 5v18z" fill="url(#gTitle)"/>
<rect x="281" y="105" width="139" height="171" fill="#d6e6f0"/>
<rect x="282" y="105" width="137" height="25" fill="#f6f7f8"/>
<rect x="284" y="128" width="133" height="1" fill="#a8a8a8"/><rect x="284" y="129" width="133" height="1" fill="#ffffff"/>
<rect x="282" y="130" width="137" height="144.5" fill="#ece9d8"/>
<path d="M288.5 92v9h9.5v-2.8h-6.5v-6.2z" fill="#000"/>
<path d="M284.5 98.5l2.2-13h7.3c2.8 0 3.8 1.8 3.3 4.3-0.5 2.6-2.3 4.2-5.3 4.2h-3.2l-0.8 4.5z" fill="#f00000"/>
<path d="M289.6 88.3h2.9c1 0 1.4 0.6 1.2 1.5-0.2 1-0.8 1.5-1.8 1.5h-2.8z" fill="#fff"/><path d="M289.4 91.5h3c1.6 0 2.6-0.8 2.9-2" fill="none" stroke="#000" stroke-width="0.9"/>
<text x="304" y="99" font-size="12" fill="#1a2040">F..</text>
<rect x="320.5" y="85.5" width="29.5" height="16" rx="2" fill="url(#gBtn)" stroke="#4a5a70"/>
<rect x="330.5" y="93.5" width="10.5" height="4" rx="1" fill="#e8e8e8" stroke="#303a48" stroke-width="1"/>
<rect x="353.5" y="85.5" width="29.5" height="16" rx="2" fill="url(#gBtn)" stroke="#4a5a70"/>
<rect x="363.5" y="89.5" width="10" height="8" rx="1" fill="#f0f0f0" stroke="#303a48" stroke-width="1.3"/><rect x="366" y="92" width="5" height="2.5" fill="#303a48"/><rect x="366.8" y="92.6" width="3.4" height="1.3" fill="#8a98a8"/>
<rect x="386.5" y="85.5" width="30" height="16" rx="2" fill="url(#gClose)" stroke="#401010"/>
<path d="M397.5 89.5l7.5 7.5M405 89.5l-7.5 7.5" stroke="#3a2020" stroke-width="3.6"/><path d="M397.5 89.5l7.5 7.5M405 89.5l-7.5 7.5" stroke="#f8f8f8" stroke-width="2.2"/>
<rect x="283.5" y="111.5" width="13" height="13" fill="#1a1a1a"/><rect x="286" y="112" width="8" height="5" fill="#f4f4f4"/><rect x="285" y="118" width="10" height="6" fill="#8a8a30"/><rect x="290" y="120" width="3" height="4" fill="#fff"/>
<path d="M309 111.5h10l-1.5 6h-10z" fill="#fff" stroke="#000" stroke-width="1"/><path d="M309.5 113.5h7M309 115.5h7" stroke="#606060" stroke-width="0.7"/>
<path d="M306.5 117h13.5l1.5 1.5v5l-1.5 1.5h-13.5l-1.5-1.5v-5z" fill="#1a1a1a"/><rect x="307" y="120" width="12.5" height="2.5" fill="#707070"/><rect x="312.5" y="120.5" width="2" height="1.6" fill="#f0f040"/><rect x="319" y="118" width="1.5" height="1.5" fill="#909090"/>
<pattern id="olv" width="2" height="2" patternUnits="userSpaceOnUse"><rect width="2" height="2" fill="#c8c890"/><rect width="1" height="1" fill="#8a8a50"/><rect x="1" y="1" width="1" height="1" fill="#8a8a50"/></pattern>
<rect x="328.5" y="112.5" width="13" height="11" rx="1" fill="url(#olv)" stroke="#202010" stroke-width="1"/><path d="M332 114.5l2-3h3l2 3z" fill="#f0e070" stroke="#303010" stroke-width="0.7"/>
<path d="M334.5 118.5h6.5l2.5 2v4h-9z" fill="#fff" stroke="#10107a" stroke-width="1.3"/><path d="M336.5 121.2h5" stroke="#10107a" stroke-width="1"/>
<path d="M353 123.5l8-8" stroke="#7a2a10" stroke-width="2.2"/><path d="M357 113l4-2h3l3 3.5-2 2.5-3-2-2 1z" fill="#8a8a30" stroke="#202010" stroke-width="0.7"/>
<path d="M352.5 112.5l11.5 11" stroke="#202020" stroke-width="2"/><path d="M353.5 113.5l10 9.5" stroke="#b0b0b0" stroke-width="0.8"/><path d="M351 111h3.5v2l-1.5 1.5h-2z" fill="#000"/><path d="M359 125.5h2M362 125.5h2M365 125.5h2" stroke="#000"/>
<path d="M376 113v11l2.5-2.5 2 3.5 1.6-0.9-2-3.5h3.2z" fill="#000"/><text x="381.5" y="122.5" font-size="12" font-weight="bold" fill="#1a1a9a">?</text>
<radialGradient id="gHelp" cx="0.4" cy="0.3" r="0.8"><stop offset="0" stop-color="#8ab0f0"/><stop offset="0.6" stop-color="#3a6ad0"/><stop offset="1" stop-color="#2a50b0"/></radialGradient>
<circle cx="405" cy="117.6" r="7.4" fill="url(#gHelp)" stroke="#b8c8e0" stroke-width="0.8"/><text x="405" y="122.3" font-size="12.5" font-weight="bold" fill="#fff" text-anchor="middle">?</text>
<radialGradient id="gLed" cx="0.5" cy="0.5" r="0.6"><stop offset="0" stop-color="#11551a"/><stop offset="1" stop-color="#06380a"/></radialGradient><rect x="346.8" y="137.8" width="30.2" height="30.2" fill="url(#gLed)" stroke="#707070" stroke-width="1.6"/>
<circle cx="313.9" cy="160.8" r="6.2" fill="#f00000"/>
<path d="M301 172l2.5-2.5 1 1.5 2 1.2-1.5 1.3z" fill="#e00000"/>
<rect x="304" y="172" width="20" height="19.6" fill="#000"/><rect x="305" y="173" width="18" height="17.6" fill="#909090"/><path d="M305 173h18l-4.5 4.5h-9v9l-4.5 4.1z" fill="#d8d8d8"/>
<rect x="310" y="177.5" width="8.8" height="8.8" fill="#fff"/><path d="M310 177.5h8.8v1.5h-7.3v7.3h-1.5z" fill="#000"/><rect x="311.5" y="179" width="6" height="6" fill="#c0c0c0"/>
<rect x="336" y="169.5" width="20" height="24" fill="#000"/><rect x="336" y="193" width="20" height="1" fill="#fff"/>
<text transform="translate(346 188.7) scale(1 1.08)" font-size="18.5" fill="#38e038" stroke="#38e038" stroke-width="0.7" text-anchor="middle">0</text>
<rect x="368.5" y="169.5" width="20" height="24" fill="#000"/><rect x="368.5" y="193" width="20" height="1" fill="#fff"/>
<text transform="translate(378.5 188.7) scale(1 1.08)" font-size="18.5" fill="#38e038" stroke="#38e038" stroke-width="0.7" text-anchor="middle">0</text>
</svg></body></html>
